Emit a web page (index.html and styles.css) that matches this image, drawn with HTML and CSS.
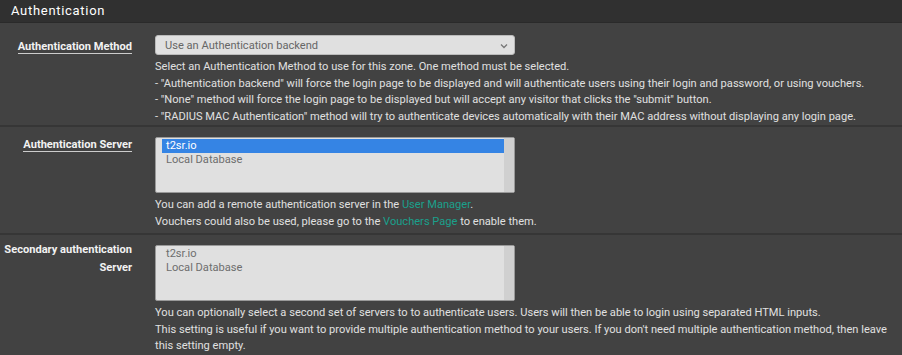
FILE: index.html
```html
<!DOCTYPE html>
<html lang="en">
<head>
  <meta charset="UTF-8" />
  <title>Authentication</title>
  <link rel="stylesheet" href="styles.css">
</head>
<body>

<div class="panel">
  <div class="panel-heading">Authentication</div>

  <!-- method -->
  <div class="form-row first">
    <div class="form-label"><span class="has-help">Authentication Method</span></div>
    <div class="form-field">
      <div class="select">
        <span>Use an Authentication backend</span>
        <svg class="caret" width="8" height="6" viewBox="0 0 8 6"><path d="M1 1.5 L4 4.5 L7 1.5" fill="none" stroke="#777" stroke-width="1.3"/></svg>
      </div>
      <div class="help">
        Select an Authentication Method to use for this zone. One method must be selected.<br>
        - "Authentication backend" will force the login page to be displayed and will authenticate users using their login and password, or using vouchers.<br>
        - "None" method will force the login page to be displayed but will accept any visitor that clicks the "submit" button.<br>
        - "RADIUS MAC Authentication" method will try to authenticate devices automatically with their MAC address without displaying any login page.
      </div>
    </div>
  </div>

  <!-- server -->
  <div class="form-row">
    <div class="form-label"><span class="has-help">Authentication Server</span></div>
    <div class="form-field">
      <div class="listbox">
        <div class="options">
          <div class="option selected">t2sr.io</div>
          <div class="option">Local Database</div>
        </div>
        <div class="scroll"></div>
      </div>
      <div class="help">
        You can add a remote authentication server in the <a href="#">User Manager</a>.<br>
        Vouchers could also be used, please go to the <a href="#">Vouchers Page</a> to enable them.
      </div>
    </div>
  </div>

  <!-- secondary -->
  <div class="form-row last">
    <div class="form-label two-line">Secondary authentication Server</div>
    <div class="form-field">
      <div class="listbox">
        <div class="options">
          <div class="option">t2sr.io</div>
          <div class="option">Local Database</div>
        </div>
        <div class="scroll"></div>
      </div>
      <div class="help">
        You can optionally select a second set of servers to to authenticate users. Users will then be able to login using separated HTML inputs.<br>
        This setting is useful if you want to provide multiple authentication method to your users. If you don't need multiple authentication method, then leave this setting empty.
      </div>
    </div>
  </div>
</div>

</body>
</html>
```

FILE: styles.css
```css
body {
  margin: 0;
  background: #424242;
  font-family: Roboto, "Liberation Sans", sans-serif;
  font-size: 11.1px;
  color: #e0e0e0;
}

.panel {
  width: 902px;
}

.panel-heading {
  background: #303030;
  color: #fff;
  font-size: 13px;
  letter-spacing: 0.7px;
  padding: 3px 11px 3px;
  height: 16px;
  border-bottom: 1px solid #2a2a2a;
}

.form-row {
  display: flex;
  border-bottom: 2px solid #363636;
  padding: 10px 0 3px;
}

.form-row.first {
  padding: 12px 0 0;
}

.form-row.last {
  border-bottom: none;
}

.form-label {
  width: 132px;
  flex: none;
  text-align: right;
  font-weight: bold;
  color: #f2f2f2;
  line-height: 16px;
}

.form-row.first .form-label {
  padding-top: 3px;
  line-height: 18px;
}

.form-label.two-line {
  margin-top: -4px;
  line-height: 18px;
}

.has-help {
  border-bottom: 1px solid #ccc;
}

.form-field {
  margin-left: 23px;
  flex: 1;
}

.select {
  box-sizing: border-box;
  width: 360px;
  height: 20px;
  background: #e0e0e0;
  border: 1px solid #bbb;
  border-radius: 3px;
  color: #666;
  display: flex;
  align-items: center;
  justify-content: space-between;
  padding: 0 6px 0 9px;
}

.caret {
  margin-top: 1px;
}

.listbox {
  box-sizing: border-box;
  width: 360px;
  height: 56px;
  background: #e0e0e0;
  border: 1px solid #999;
  border-radius: 2px;
  display: flex;
}

.options {
  flex: 1;
  padding: 1px 0 0 6px;
}

.option {
  color: #6e6e6e;
  line-height: 13.5px;
  padding-left: 4px;
}

.option.selected {
  background: #3584e4;
  color: #fff;
}

.scroll {
  width: 10px;
  background: #d0d0d0;
}

.help {
  margin-top: 4px;
  line-height: 16.5px;
}

a {
  color: #1aa08c;
  text-decoration: none;
}
```
